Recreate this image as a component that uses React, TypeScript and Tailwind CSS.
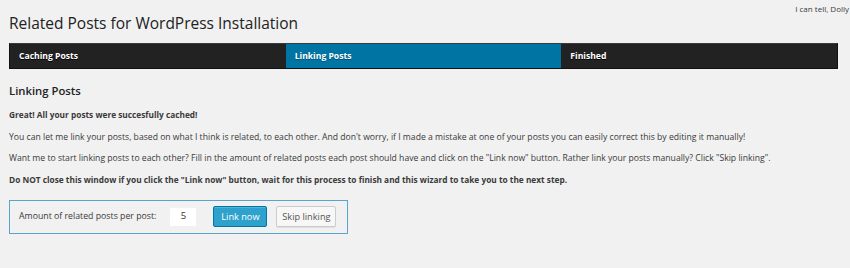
import React from "react";

export default function App() {
  return (
    <div className="w-[850px] h-[268px] overflow-hidden bg-[#f1f1f1] font-['Open_Sans',sans-serif] text-[#3a3a3a]">
      <div className="flex items-start justify-between">
        <h1 className="pl-[9px] pt-[13px] text-[15.5px] leading-[20px] font-normal text-[#222]">
          Related Posts for WordPress Installation
        </h1>
        <p className="pr-[1px] pt-[4px] text-[8px] leading-[10px] text-[#3a3a3a]">I can tell, Dolly</p>
      </div>

      <div className="ml-[9px] mt-[10px] grid h-[26px] w-[829px] grid-cols-3 border border-[#111] border-t-[#3a3a3a] text-[8.6px] font-bold text-white">
        <div className="flex items-center bg-[#222] pl-[9px] [text-shadow:0_1px_0_#000]">Caching Posts</div>
        <div className="flex items-center bg-[#0074a2] pl-[9px] [text-shadow:0_1px_0_#005577]">Linking Posts</div>
        <div className="flex items-center bg-[#222] pl-[9px] [text-shadow:0_1px_0_#000]">Finished</div>
      </div>

      <div className="pl-[9px]">
        <h3 className="mt-[14px] text-[11.3px] leading-[15px] font-semibold text-[#222]">Linking Posts</h3>
        <p className="mt-[10px] text-[8.3px] leading-[14px] font-bold">Great! All your posts were succesfully cached!</p>
        <p className="mt-[7.5px] text-[8.65px] leading-[14px]">
          You can let me link your posts, based on what I think is related, to each other. And don't worry, if I made a mistake at one of your posts you can easily correct this by editing it manually!
        </p>
        <p className="mt-[7.5px] text-[8.65px] leading-[14px]">
          Want me to start linking posts to each other? Fill in the amount of related posts each post should have and click on the "Link now" button. Rather link your posts manually? Click "Skip linking".
        </p>
        <p className="mt-[7.5px] text-[8.3px] leading-[14px] font-bold">
          Do NOT close this window if you click the "Link now" button, wait for this process to finish and this wizard to take you to the next step.
        </p>

        <div className="mt-[13px] flex h-[34px] w-[339px] items-center border border-[#5aa3cc] pl-[9px] text-[8.75px]">
          <span className="text-[#3a3a3a]">Amount of related posts per post:</span>
          <div className="ml-[14px] flex h-[19px] w-[26px] items-center justify-center bg-white text-[9.5px] text-[#333] shadow-[inset_0_1px_1px_rgba(0,0,0,0.06)]">
            5
          </div>
          <button className="ml-[17px] flex h-[21px] w-[54px] items-center justify-center rounded-[2px] border border-[#0074a2] bg-[#2ea2cc] text-[9.2px] text-white shadow-[inset_0_1px_0_rgba(120,200,230,0.5)]">
            Link now
          </button>
          <button className="ml-[9px] flex h-[21px] w-[60px] items-center justify-center rounded-[2px] border border-[#ccc] bg-[#f7f7f7] text-[9.2px] text-[#555] shadow-[0_1px_0_rgba(0,0,0,0.08)]">
            Skip linking
          </button>
        </div>
      </div>
    </div>
  );
}
